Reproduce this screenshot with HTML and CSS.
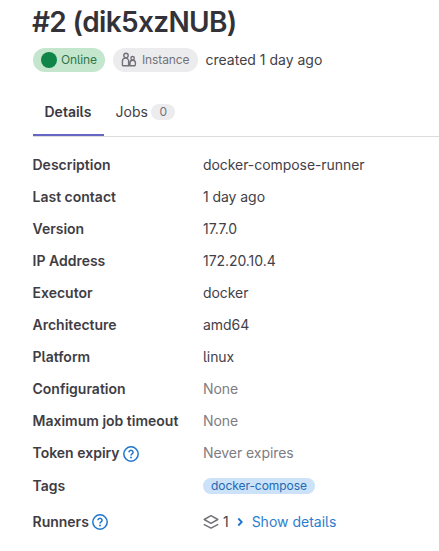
FILE: index.html
```
<!DOCTYPE html>
<html lang="en">
<head>
<meta charset="utf-8">
<title>Runner #2</title>
<link rel="stylesheet" href="styles.css">
</head>
<body>
<main class="page">
  <h1 class="title">#2 (dik5xzNUB)</h1>
  <div class="meta">
    <span class="badge badge-success"><span class="dot"></span><span class="online">Online</span></span>
    <span class="badge badge-neutral">
      <svg class="icon" viewBox="0 0 16 16" fill="none" stroke="currentColor" stroke-width="1.4"><circle cx="5" cy="3.4" r="2.2"/><path d="M7.6 13.8H2.4a1 1 0 0 1-1-1V9.400a3.200 3.200 0 0 1 6.200-1.200V13.800zM7.600 13.800h5.600a1.200 1.200 0 0 0 1.200-1.200V11a2.700 2.700 0 0 0-5.400 0v2.800"/><circle cx="11.600" cy="6.200" r="1.700"/></svg>
      <span class="instance">Instance</span>
    </span>
    <span class="created">created 1 day ago</span>
  </div>
  <nav class="tabs">
    <a class="tab active"><span class="tab-details">Details</span></a>
    <a class="tab"><span class="tab-jobs">Jobs</span><span class="count">0</span></a>
  </nav>
  <dl class="details">
    <dt>Description</dt><dd>docker-compose-runner</dd>
    <dt>Last contact</dt><dd>1 day ago</dd>
    <dt>Version</dt><dd>17.7.0</dd>
    <dt>IP Address</dt><dd>172.20.10.4</dd>
    <dt>Executor</dt><dd>docker</dd>
    <dt>Architecture</dt><dd>amd64</dd>
    <dt>Platform</dt><dd>linux</dd>
    <dt>Configuration</dt><dd class="muted">None</dd>
    <dt>Maximum job timeout</dt><dd class="muted">None</dd>
    <dt>Token expiry <svg class="icon help help-low" viewBox="0 0 16 16" fill="none" stroke="currentColor" stroke-width="1.5"><circle cx="8" cy="8" r="7.200"/><path d="M5.900 6.300a2.100 1.900 0 1 1 3.200 1.600C8.300 8.400 8 8.600 8 9.500"/><circle cx="8" cy="11.500" r=".95" fill="currentColor" stroke="none"/></svg></dt><dd class="muted">Never expires</dd>
    <dt class="row-tags">Tags</dt><dd class="row-tags"><span class="tag">docker-compose</span></dd>
    <dt class="row-runners">Runners <svg class="icon help" viewBox="0 0 16 16" fill="none" stroke="currentColor" stroke-width="1.5"><circle cx="8" cy="8" r="7.200"/><path d="M5.900 6.300a2.100 1.900 0 1 1 3.200 1.600C8.300 8.400 8 8.600 8 9.500"/><circle cx="8" cy="11.500" r=".95" fill="currentColor" stroke="none"/></svg></dt>
    <dd class="row-runners">
      <svg class="icon layers" viewBox="0 0 16 16" fill="none" stroke="currentColor" stroke-width="1.500" stroke-linejoin="round"><path d="M8 1.700L1.200 5.500 8 9.300l6.800-3.800z"/><path d="M.8 10.300L8 14.200l7.200-3.900"/></svg>
      <span class="num">1</span>
      <svg class="chevron" viewBox="0 0 12 12" fill="none" stroke="currentColor" stroke-width="1.800"><path d="M4.300 2.500L7.700 6 4.300 9.500"/></svg>
      <a class="show">Show details</a>
    </dd>
  </dl>
</main>
</body>
</html>
```
FILE: styles.css
```
body {
  margin: 0;
  background: #fff;
  color: #434148;
  font: 14px/20px Inter, sans-serif;
  font-feature-settings: "cv05";
  overflow: hidden;
}
.page { padding: 4px 0 0 33px; }
.title {
  margin: 0 0 0 -1px;
  font-size: 28px;
  line-height: 36px;
  font-weight: 600;
  letter-spacing: -0.65px;
  color: #333238;
  white-space: nowrap;
}
.meta { display: flex; align-items: center; gap: 8px; margin-top: 8px; height: 24px; }
.badge {
  display: flex;
  align-items: center;
  box-sizing: border-box;
  height: 24px;
  padding: 0 8px;
  border-radius: 12px;
  font-size: 12px;
  white-space: nowrap;
}
.badge-success { width: 72px; background: #c3e6cd; color: #2f7549; gap: 4px; }
.badge-neutral { width: 85px; background: #ececef; color: #737278; gap: 5px; }
.online, .instance { letter-spacing: -0.1px; }
.created { margin-left: -0.5px; }
.dot { flex: none; width: 16px; height: 16px; border-radius: 50%; background: #108548; }
.icon { width: 16px; height: 16px; flex: none; }
.tabs { display: flex; height: 48px; margin-top: 16px; border-bottom: 1px solid #dcdcde; }
.tab { display: flex; align-items: center; padding: 0 12px; }
.tab.active { width: 47px; font-weight: 600; color: #3a383f; box-shadow: inset 0 -2px #6666c4; }
.tab-details, .tab-jobs { margin-left: -0.5px; }
.count {
  width: 24px;
  height: 16px;
  margin-left: 3.5px;
  border-radius: 8px;
  background: #ececef;
  color: #737278;
  font-size: 12px;
  line-height: 16px;
  text-align: center;
}
.details {
  display: grid;
  grid-template-columns: 170.5px 1fr;
  grid-template-rows: repeat(10, 32px) 33px 39px;
  margin: 12px 0 0 -0.5px;
  white-space: nowrap;
}
dt, dd { display: flex; align-items: center; margin: 0; }
dt { font-weight: 600; color: #3f3d44; }
dd { letter-spacing: -0.06px; }
.muted { color: #7d7c82; }
.help { margin-left: 3.5px; color: #1f75cb; }
.help-low { margin-top: 2px; }
.tag {
  height: 16px;
  padding: 0 8px;
  border-radius: 8px;
  background: #cbe2f9;
  color: #2369b3;
  font-size: 12px;
  line-height: 16px;
}
.layers { color: #737278; }
.num { margin-left: 4px; }
.chevron { width: 12px; height: 12px; margin-left: 5px; color: #1f75cb; }
.show { margin-left: 6px; color: #2d7dcd; letter-spacing: 0; }
```
